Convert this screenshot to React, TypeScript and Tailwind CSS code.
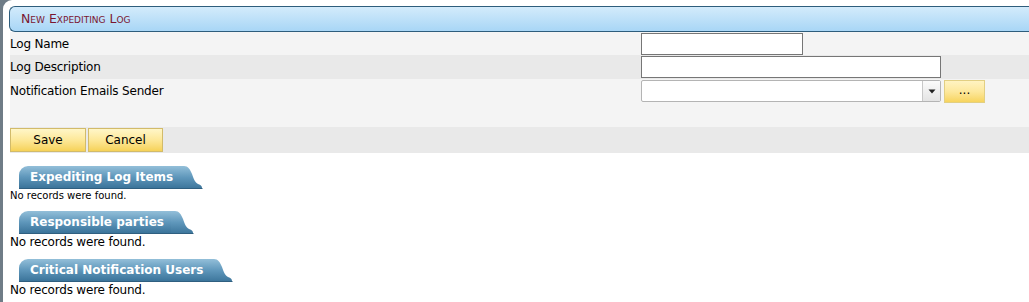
const font = { fontFamily: '"DejaVu Sans", Verdana, sans-serif' };

function Tab({ label, id }: { label: string; id: string }) {
  return (
    <div className="flex items-stretch h-[23px] ml-[10px]">
      <div className="flex items-center pl-[11px] pr-[7px] rounded-tl-[9px] bg-gradient-to-b from-[#93bfd9] via-[#5f97bb] to-[#3b749a] border-b border-[#2f5f80]">
        <span className="text-white font-bold text-[12px] whitespace-nowrap">{label}</span>
      </div>
      <svg width="23" height="23" viewBox="0 0 23 23" className="block">
        <defs>
          <linearGradient id={id} x1="0" y1="0" x2="0" y2="1">
            <stop offset="0" stopColor="#93bfd9" />
            <stop offset="0.5" stopColor="#5f97bb" />
            <stop offset="1" stopColor="#3b749a" />
          </linearGradient>
        </defs>
        <path d="M0 0 H4 C8 0 10 3 12 8 C14 14 15 16 18 18 C21 19 22 20 22 22 V23 H0 Z" fill={`url(#${id})`} />
        <path d="M0 22.5 H22.5" stroke="#2f5f80" strokeWidth="1" />
      </svg>
    </div>
  );
}

function YellowButton({ children, w }: { children: React.ReactNode; w: string }) {
  return (
    <button
      className={`${w} h-[24px] text-[12px] text-black border border-[#d2bb6a] bg-gradient-to-b from-[#fff6c8] via-[#fde898] to-[#f6d257]`}
    >
      {children}
    </button>
  );
}

export default function App() {
  return (
    <div className="w-[1029px] h-[302px] bg-[#6f7c87] overflow-hidden" style={font}>
      <div className="ml-[3px] h-full bg-white rounded-tl-[9px] pt-[6px] pl-[6px] text-black">
        {/* header */}
        <div className="h-[26px] flex items-center pl-[11px] border border-r-0 border-[#2e5d7c] rounded-l-[6px] bg-gradient-to-b from-[#d3ebfb] to-[#a8d6f6]">
          <span className="text-[#7a1630] text-[12.5px]" style={{ fontVariant: 'small-caps' }}>
            New Expediting Log
          </span>
        </div>

        {/* form rows */}
        <div className="flex h-[23px] bg-[#f4f4f4] ml-[1px]">
          <div className="w-[631px] flex items-center text-[12px] tracking-[-0.2px]">Log Name</div>
          <div className="flex items-center">
            <input className="w-[162px] h-[22px] border border-[#767676] bg-white outline-none" />
          </div>
        </div>
        <div className="flex h-[24px] bg-[#e9e9e9] ml-[1px]">
          <div className="w-[631px] flex items-center text-[12px] tracking-[-0.2px]">Log Description</div>
          <div className="flex items-center">
            <input className="w-[300px] h-[22px] border border-[#767676] bg-white outline-none" />
          </div>
        </div>
        <div className="flex h-[48px] bg-[#f4f4f4] ml-[1px]">
          <div className="w-[631px] h-[24px] flex items-center text-[12px] tracking-[-0.2px]">Notification Emails Sender</div>
          <div className="flex items-start pt-[1px] gap-[3px]">
            <div className="w-[300px] h-[22px] flex border border-[#b4b4b4] rounded-[2px] bg-white">
              <div className="flex-1" />
              <div className="w-[18px] flex items-center justify-center border-l border-[#c8c8c8] bg-gradient-to-b from-[#fbfbfb] to-[#e4e4e4]">
                <svg width="8" height="5" viewBox="0 0 8 5">
                  <path d="M0.5 0.5 H7.5 L4 4.5 Z" fill="#222" />
                </svg>
              </div>
            </div>
            <button className="w-[41px] h-[23px] border border-[#e2cf82] bg-gradient-to-b from-[#fff3c2] via-[#fde89c] to-[#f7d45c] text-[12px] leading-none pb-[4px]">
              ...
            </button>
          </div>
        </div>
        <div className="flex items-center gap-[2px] h-[26px] bg-[#e9e9e9] ml-[1px]">
          <YellowButton w="w-[76px]">Save</YellowButton>
          <YellowButton w="w-[75px]">Cancel</YellowButton>
        </div>

        {/* sub grids */}
        <div className="pt-[13px]">
          <Tab label="Expediting Log Items" id="tab-items" />
          <div className="text-[10px] leading-[12px] mt-[1px] ml-[1px]">No records were found.</div>
        </div>
        <div className="pt-[9px]">
          <Tab label="Responsible parties" id="tab-parties" />
          <div className="text-[12px] leading-[14px] mt-[1px] ml-[1px] tracking-[-0.2px]">No records were found.</div>
        </div>
        <div className="pt-[10px]">
          <Tab label="Critical Notification Users" id="tab-users" />
          <div className="text-[12px] leading-[14px] mt-[1px] ml-[1px] tracking-[-0.2px]">No records were found.</div>
        </div>
      </div>
    </div>
  );
}
